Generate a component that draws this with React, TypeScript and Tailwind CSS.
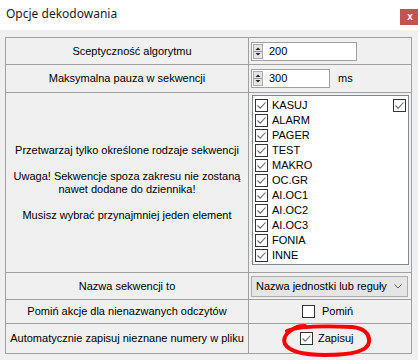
const items = [
  "KASUJ",
  "ALARM",
  "PAGER",
  "TEST",
  "MAKRO",
  "OC.GR",
  "AI.OC1",
  "AI.OC2",
  "AI.OC3",
  "FONIA",
  "INNE",
];

function CheckBox({ checked }: { checked: boolean }) {
  return (
    <span className="flex h-[13px] w-[13px] shrink-0 items-center justify-center border border-[#333333] bg-white">
      {checked && (
        <svg width="11" height="11" viewBox="0 0 11 11">
          <path
            d="M1.5 5.5 L4.2 8.2 L9.5 2.5"
            fill="none"
            stroke="#6b6b6b"
            strokeWidth="1.1"
          />
        </svg>
      )}
    </span>
  );
}

function Spinner({ value, className }: { value: string; className: string }) {
  return (
    <div
      className={`flex h-[19px] items-center border border-[#a0a0a0] bg-white ${className}`}
    >
      <div className="ml-[1px] h-[15px] w-[10px] border border-[#acacac] bg-[#e5e5e5]">
        <svg width="8" height="13" viewBox="0 0 8 13" className="block">
          <path d="M1.5 5 L4 2.5 L6.5 5 Z" fill="#222" />
          <line x1="0" y1="6.5" x2="8" y2="6.5" stroke="#9a9a9a" />
          <path d="M1.5 8 L4 10.5 L6.5 8 Z" fill="#222" />
        </svg>
      </div>
      <span className="pl-[6px] text-[11px] leading-none text-black">{value}</span>
    </div>
  );
}

export default function App() {
  return (
    <div className="relative h-[360px] w-[418px] overflow-hidden bg-[#f0f0f0] font-['Liberation_Sans',Arial,sans-serif] text-[11px] text-black">
      {/* title bar */}
      <div className="flex h-[30px] items-start justify-between bg-white">
        <span className="pl-[6px] pt-[6px] font-['Noto_Sans',sans-serif] text-[12px] leading-[16px] text-[#1a1a1a]">
          Opcje dekodowania
        </span>
        <span className="mt-[9px] flex h-[16px] w-[18px] items-center justify-center bg-[#c75050] pl-[2px] text-[10px] font-bold leading-none text-white">
          x
        </span>
      </div>

      {/* options table */}
      <div className="ml-[5px] mt-[7px] w-[407px] border border-[#a0a0a0]">
        <div className="flex h-[27px] border-b border-[#a0a0a0]">
          <div className="flex w-[243px] items-center justify-center border-r border-[#a0a0a0] pl-[10px]">
            Sceptyczność algorytmu
          </div>
          <div className="flex items-center pl-[2px]">
            <Spinner value="200" className="w-[106px]" />
          </div>
        </div>

        <div className="flex h-[28px] border-b border-[#a0a0a0]">
          <div className="flex w-[243px] items-center justify-center border-r border-[#a0a0a0]">
            Maksymalna pauza w sekwencji
          </div>
          <div className="flex items-center pl-[2px]">
            <Spinner value="300" className="w-[79px]" />
            <span className="pl-[8px]">ms</span>
          </div>
        </div>

        <div className="flex h-[180px] border-b border-[#a0a0a0]">
          <div className="flex w-[243px] flex-col items-center justify-center border-r border-[#a0a0a0] text-center leading-[13px]">
            <p>Przetwarzaj tylko określone rodzaje sekwencji</p>
            <p className="h-[13px]" />
            <p>Uwaga! Sekwencje spoza zakresu nie zostaną</p>
            <p>nawet dodane do dziennika!</p>
            <p className="h-[13px]" />
            <p>Musisz wybrać przynajmniej jeden element</p>
          </div>
          <div className="pl-[3px] pt-[2px]">
            <div className="relative h-[170px] w-[157px] border border-[#828790] bg-white pl-[2px] pt-[2px]">
              {items.map((item) => (
                <div key={item} className="flex h-[15px] items-center gap-[4px]">
                  <CheckBox checked />
                  <span className="leading-none">{item}</span>
                </div>
              ))}
              <div className="absolute right-[2px] top-[3px]">
                <CheckBox checked />
              </div>
            </div>
          </div>
        </div>

        <div className="flex h-[27px] border-b border-[#a0a0a0]">
          <div className="flex w-[243px] items-center justify-center border-r border-[#a0a0a0]">
            Nazwa sekwencji to
          </div>
          <div className="flex items-center pl-[2px]">
            <div className="flex h-[21px] w-[157px] items-center justify-between border border-[#acacac] bg-[#e5e5e5] pl-[4px] pr-[5px]">
              <span className="leading-none">Nazwa jednostki lub reguły</span>
              <svg width="8" height="5" viewBox="0 0 8 5">
                <path d="M0.5 0.5 L4 4 L7.5 0.5" fill="none" stroke="#606060" />
              </svg>
            </div>
          </div>
        </div>

        <div className="flex h-[24px] border-b border-[#a0a0a0]">
          <div className="flex w-[243px] items-center justify-center border-r border-[#a0a0a0]">
            Pomiń akcje dla nienazwanych odczytów
          </div>
          <div className="flex flex-1 items-center pl-[53px]">
            <CheckBox checked={false} />
            <span className="pl-[7px] leading-none">Pomiń</span>
          </div>
        </div>

        <div className="flex h-[29px]">
          <div className="flex w-[243px] items-center justify-center border-r border-[#a0a0a0]">
            Automatycznie zapisuj nieznane numery w pliku
          </div>
          <div className="flex flex-1 items-center pl-[51px]">
            <CheckBox checked />
            <span className="pl-[5px] leading-none">Zapisuj</span>
          </div>
        </div>
      </div>

      {/* red hand-drawn mark */}
      <svg
        className="pointer-events-none absolute left-0 top-0"
        width="418"
        height="360"
        viewBox="0 0 418 360"
      >
        <path
          d="M287 331 C300 325 330 326 352 327 C364 328 370 334 369 342 C368 351 352 355 325 355 C303 355 289 351 285 344 C282 337 288 331 297 327 C300 326 303 326 305 326"
          fill="none"
          stroke="#ff0000"
          strokeWidth="4"
          strokeLinecap="round"
          strokeLinejoin="round"
          style={{ filter: "blur(0.7px)" }}
        />
      </svg>
    </div>
  );
}
